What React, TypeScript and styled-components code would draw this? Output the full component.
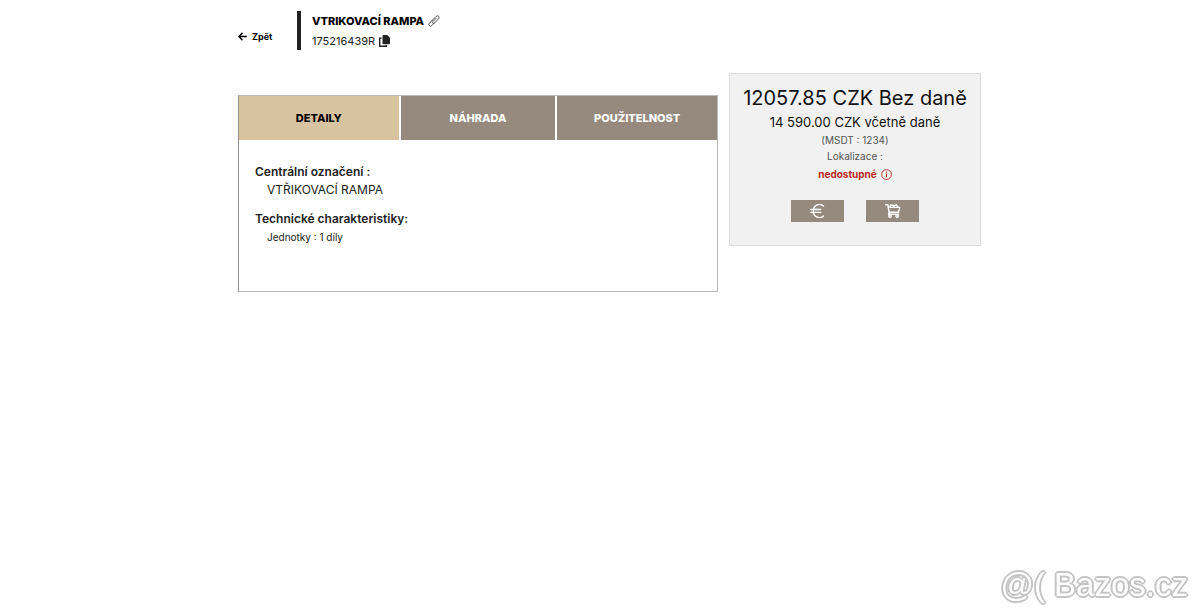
import React, { useState } from "react";
import styled, { createGlobalStyle } from "styled-components";

const GlobalStyle = createGlobalStyle`
  * { box-sizing: border-box; }
  body {
    margin: 0;
    background: #fff;
    color: #222;
    font-family: Inter, "Liberation Sans", sans-serif;
    font-size: 11px;
    line-height: 16px;
  }
  h1, h2, p, dl, dt, dd { margin: 0; }
  button { border: 0; padding: 0; font: inherit; cursor: pointer; }
  svg { display: block; flex: none; }
`;

const Page = styled.main`
  display: grid;
  grid-template-columns: minmax(0, 480fr) minmax(0, 252fr);
  column-gap: 11px;
  align-items: start;
  max-width: 762px;
  margin: 0 auto;
  padding-left: 19px;

  @media (max-width: 680px) {
    grid-template-columns: minmax(0, 1fr);
    padding: 0 16px;
  }
`;

const Header = styled.header`
  display: flex;
  padding-top: 11px;
  margin-bottom: 45px;
`;

const BackLink = styled.a`
  display: flex;
  align-items: center;
  gap: 5px;
  width: 59px;
  padding-top: 12px;
  color: #000;
  font-size: 9px;
  font-weight: 700;
  text-decoration: none;
`;

const Heading = styled.div`
  display: flex;
  flex-direction: column;
  gap: 4px;
  padding: 2px 0 1px 11px;
  border-left: 4px solid #222;
`;

const HeadingRow = styled.div`
  display: flex;
  align-items: center;
  gap: 4px;
`;

const Title = styled.h1`
  color: #000;
  font-size: 11px;
  font-weight: 800;
  line-height: 16px;
`;

const IconButton = styled.button`
  background: none;
  color: #222;
`;

const Panel = styled.section`
  border: 1px solid #b9b9b9;
  border-left-color: #8f8f8f;
`;

const TabList = styled.div`
  display: grid;
  grid-template-columns: 160fr 155fr 160fr;
  gap: 2px;
`;

const Tab = styled.button<{ $active: boolean }>`
  height: 44px;
  background: ${(p) => (p.$active ? "#d8c3a0" : "#968a7e")};
  color: ${(p) => (p.$active ? "#000" : "#fff")};
  font-weight: 800;
`;

const Details = styled.dl`
  min-height: 151px;
  padding: 24px 16px;
`;

const Term = styled.dt`
  font-size: 12px;
  font-weight: 600;
`;

const Value = styled.dd<{ $small?: boolean }>`
  padding: 2px 12px 13px;
  font-size: ${(p) => (p.$small ? 10 : 12)}px;
`;

const PriceCard = styled.aside`
  display: flex;
  flex-direction: column;
  align-items: center;
  margin-top: 73px;
  padding: 10px 8px 23px;
  border: 1px solid #dcdcdc;
  background: #f1f1f1;
  text-align: center;
`;

const NetPrice = styled.p`
  color: #111;
  font-size: 20px;
  line-height: 28px;
`;

const GrossPrice = styled.p`
  color: #111;
  font-size: 13px;
  line-height: 20px;
`;

const Note = styled.p`
  color: #555;
  font-size: 10px;
`;

const Stock = styled.p`
  display: flex;
  align-items: center;
  gap: 4px;
  padding-top: 2px;
  color: #b82a25;
  font-size: 10px;
  font-weight: 700;
`;

const Actions = styled.div`
  display: flex;
  gap: 22px;
  margin-top: 18px;
`;

const ActionButton = styled.button`
  display: grid;
  place-items: center;
  width: 53px;
  height: 22px;
  background: #968a7e;
  color: #fff;
`;

const Watermark = styled.div`
  position: fixed;
  right: 12px;
  bottom: 12px;
  color: #fff;
  font: 33px/36px "Liberation Sans", sans-serif;
  -webkit-text-stroke: 1px #fff;
  paint-order: stroke fill;
  text-shadow:
    -1px -1px #c4c4c4, 1px -1px #c4c4c4, -1px 1px #c4c4c4, 1px 1px #c4c4c4,
    -2px 0 #c4c4c4, 2px 0 #c4c4c4, 0 -2px #c4c4c4, 0 2px #c4c4c4;
  pointer-events: none;
`;

const ArrowIcon = () => (
  <svg width="9" height="9" viewBox="0 0 9 9" fill="none" stroke="currentColor" strokeWidth="1.4" aria-hidden="true">
    <path d="M4.5 .7 .9 4.5l3.6 3.8M1 4.5h7.8" />
  </svg>
);

const LinkIcon = () => (
  <svg width="12" height="12" viewBox="0 0 12 12" fill="none" stroke="currentColor" strokeWidth=".8" strokeLinecap="round" aria-hidden="true">
    <path d="M4.2 5.4 8.1 1.4a1.6 1.6 0 0 1 2.5 2.3L6.3 8.1a1 1 0 0 1-1.5-1.4l3.4-3.5" />
    <path d="M4.2 5.4 1.4 8.3a1.6 1.6 0 0 0 2.4 2.3l2.5-2.5" />
  </svg>
);

const CopyIcon = () => (
  <svg width="11" height="12" viewBox="0 0 11 12" aria-hidden="true">
    <path d="M4.5 0h3.8L11 2.7v5.6a1 1 0 0 1-1 1H4.5a1 1 0 0 1-1-1V1a1 1 0 0 1 1-1Z" fill="currentColor" />
    <path d="M2.7 3.1H.7v8.2h6.6v-1.2" fill="none" stroke="currentColor" strokeWidth="1.4" />
  </svg>
);

const InfoIcon = () => (
  <svg width="11" height="11" viewBox="0 0 11 11" fill="none" stroke="currentColor" aria-hidden="true">
    <circle cx="5.5" cy="5.5" r="4.9" strokeWidth=".9" />
    <path d="M5.5 4.6v3.6M5.5 2.6v1.1" strokeWidth="1.1" />
  </svg>
);

const EuroIcon = () => (
  <svg width="15" height="14" viewBox="0 0 15 14" fill="none" stroke="currentColor" strokeWidth="1.4" strokeLinecap="round" aria-hidden="true">
    <path d="M13.5 2.1A6 6 0 0 0 3.4 7a6 6 0 0 0 10.1 4.9M.9 5.5h9.8M.9 8.4h9.8" />
  </svg>
);

const CartIcon = () => (
  <svg width="16" height="14" viewBox="0 0 16 14" fill="none" stroke="currentColor" strokeWidth="1.4" strokeLinejoin="round" strokeLinecap="round" aria-hidden="true">
    <path d="M.7 .8h2.2l1.2 7.4h9.5l1.1-4.8H3.4M4.1 8.2l-.5 2.1h10" />
    <path d="M5.3 3.2V1.3h3.2v1.9M8.6 2.2l2.6-1.4 1.8 2.4" />
    <circle cx="5" cy="12.1" r="1.2" />
    <circle cx="12.1" cy="12.1" r="1.2" />
  </svg>
);

const tabs = ["DETAILY", "NÁHRADA", "POUŽITELNOST"];

export default function App() {
  const [active, setActive] = useState(0);

  return (
    <>
      <GlobalStyle />
      <Page>
        <div>
          <Header>
            <BackLink href="#">
              <ArrowIcon />
              Zpět
            </BackLink>
            <Heading>
              <HeadingRow>
                <Title>VTRIKOVACÍ RAMPA</Title>
                <IconButton type="button" aria-label="Odkaz">
                  <LinkIcon />
                </IconButton>
              </HeadingRow>
              <HeadingRow>
                <span>175216439R</span>
                <IconButton type="button" aria-label="Kopírovat">
                  <CopyIcon />
                </IconButton>
              </HeadingRow>
            </Heading>
          </Header>
          <Panel>
            <TabList role="tablist">
              {tabs.map((label, i) => (
                <Tab
                  key={label}
                  type="button"
                  role="tab"
                  aria-selected={active === i}
                  $active={active === i}
                  onClick={() => setActive(i)}
                >
                  {label}
                </Tab>
              ))}
            </TabList>
            <Details role="tabpanel">
              <Term>Centrální označení :</Term>
              <Value>VTŘIKOVACÍ RAMPA</Value>
              <Term>Technické charakteristiky:</Term>
              <Value $small>Jednotky : 1 díly</Value>
            </Details>
          </Panel>
        </div>
        <PriceCard>
          <NetPrice>12057.85 CZK Bez daně</NetPrice>
          <GrossPrice>14 590.00 CZK včetně daně</GrossPrice>
          <Note>(MSDT : 1234)</Note>
          <Note>Lokalizace :</Note>
          <Stock>
            nedostupné
            <InfoIcon />
          </Stock>
          <Actions>
            <ActionButton type="button" aria-label="Cena">
              <EuroIcon />
            </ActionButton>
            <ActionButton type="button" aria-label="Do košíku">
              <CartIcon />
            </ActionButton>
          </Actions>
        </PriceCard>
      </Page>
      <Watermark>@( Bazos.cz</Watermark>
    </>
  );
}
